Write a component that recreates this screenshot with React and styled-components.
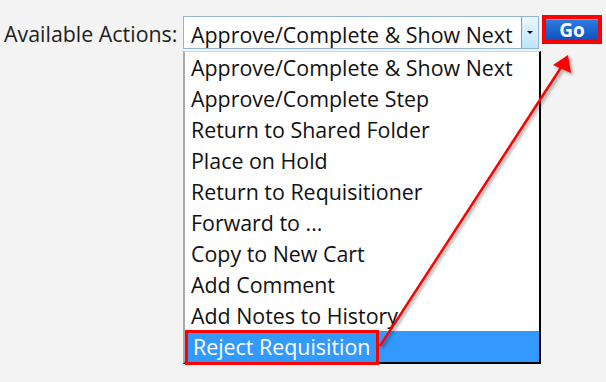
import styled, { createGlobalStyle } from "styled-components";

const GlobalStyle = createGlobalStyle`
  body {
    margin: 0;
    background: #f3f3f3;
    font-family: "Open Sans", "Noto Sans", sans-serif;
  }
`;

const Pagina = styled.div`
  position: relative;
  width: 606px;
  height: 382px;
  overflow: hidden;
`;

const Linha = styled.div`
  display: flex;
  align-items: flex-start;
  padding: 15px 0 0 4px;
`;

const Rotulo = styled.span`
  font-size: 21.4px;
  color: #1e1e1e;
  line-height: 34px;
  margin-top: 2px;
  width: 179px;
  white-space: nowrap;
`;

const ColunaSelect = styled.div`
  display: flex;
  flex-direction: column;
  width: 358px;
`;

const Select = styled.div`
  display: flex;
  height: 33px;
  margin-top: 1px;
  width: 356px;
  background: #fff;
  border: 1px solid #8fb5d9;
  box-sizing: border-box;
`;

const SelectTexto = styled.div`
  flex: 1;
  font-size: 21.4px;
  line-height: 31px;
  padding: 2px 0 0 7px;
  color: #111;
  white-space: nowrap;
  overflow: hidden;
`;

const SetaBotao = styled.div`
  width: 16px;
  flex-shrink: 0;
  display: flex;
  align-items: center;
  justify-content: center;
  background: linear-gradient(#eaf6fd, #bee6fd);
  border-left: 1px solid #6ea0cf;
`;

const Triangulo = styled.div`
  width: 0;
  height: 0;
  border-left: 3px solid transparent;
  border-right: 3px solid transparent;
  border-top: 3px solid #000;
`;

const Lista = styled.div`
  margin-top: 2px;
  background: #fff;
  border-left: 2px solid #a9a9a9;
  border-top: 1px solid #d6d6d6;
  border-right: 2px solid #000;
  border-bottom: 2px solid #000;
  box-sizing: border-box;
  width: 358px;
  display: flex;
  flex-direction: column;
`;

const Item = styled.div`
  height: 31px;
  line-height: 31px;
  font-size: 21.4px;
  padding-left: 6px;
  white-space: nowrap;
  color: ${(p) => (p.$selecionado ? "#fff" : "#111")};
  background: ${(p) => (p.$selecionado ? "#3399ff" : "transparent")};
`;

const Destaque = styled.span`
  display: inline-block;
  margin-left: -6px;
  padding: 0 6px 0 5px;
  height: 29px;
  line-height: 27px;
  border: 3px solid #ff0000;
  margin-top: -2px;
`;

const MolduraGo = styled.div`
  margin-left: 1px;
  border: 4px solid #ff0000;
  width: 52px;
  height: 21px;
`;

const BotaoGo = styled.button`
  width: 100%;
  height: 100%;
  border: 0;
  padding: 0;
  background: linear-gradient(#2e7be0, #0c52c0);
  color: #fff;
  font-family: "Open Sans", "Noto Sans", sans-serif;
  font-weight: 700;
  font-size: 19px;
  line-height: 20px;
  border-top: 1px solid #6aa3ec;
`;

const SetaAnotacao = styled.svg`
  position: absolute;
  left: 0;
  top: 0;
  pointer-events: none;
`;

const opcoes = [
  "Approve/Complete & Show Next",
  "Approve/Complete Step",
  "Return to Shared Folder",
  "Place on Hold",
  "Return to Requisitioner",
  "Forward to ...",
  "Copy to New Cart",
  "Add Comment",
  "Add Notes to History",
  "Reject Requisition",
];

export default function App() {
  return (
    <Pagina>
      <GlobalStyle />
      <Linha>
        <Rotulo>Available Actions:</Rotulo>
        <ColunaSelect>
          <Select>
            <SelectTexto>Approve/Complete &amp; Show Next</SelectTexto>
            <SetaBotao>
              <Triangulo />
            </SetaBotao>
          </Select>
          <Lista>
            {opcoes.map((op, i) => {
              const ultimo = i === opcoes.length - 1;
              return (
                <Item key={op} $selecionado={ultimo}>
                  {ultimo ? <Destaque>{op}</Destaque> : op}
                </Item>
              );
            })}
          </Lista>
        </ColunaSelect>
        <MolduraGo>
          <BotaoGo>Go</BotaoGo>
        </MolduraGo>
      </Linha>
      <SetaAnotacao width="606" height="382" viewBox="0 0 606 382">
        <defs>
          <filter id="sombra" x="-20%" y="-20%" width="140%" height="140%">
            <feDropShadow dx="2" dy="2" stdDeviation="1.5" floodColor="#000" floodOpacity="0.35" />
          </filter>
        </defs>
        <g filter="url(#sombra)">
          <line x1="380" y1="346" x2="562" y2="66" stroke="#ff0000" strokeWidth="2.5" />
          <polygon points="568,55 571,73 553,65" fill="#ff0000" />
        </g>
      </SetaAnotacao>
    </Pagina>
  );
}
